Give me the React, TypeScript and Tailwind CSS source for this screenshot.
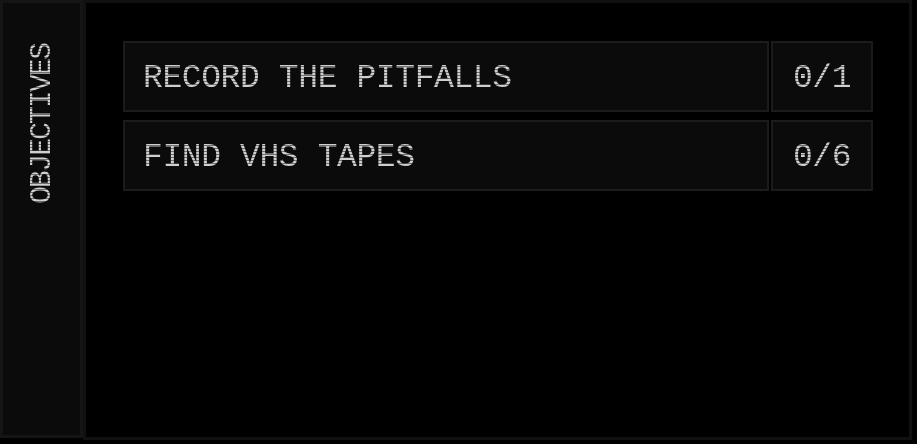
import React from 'react';

const objectives = [
  { label: 'RECORD THE PITFALLS', done: 0, total: 1 },
  { label: 'FIND VHS TAPES', done: 0, total: 6 },
];

const scan =
  'bg-[repeating-linear-gradient(to_bottom,#cfcfcf_0px,#cfcfcf_2px,#6f6f6f_2px,#6f6f6f_3px)] bg-clip-text text-transparent';

export default function App() {
  return (
    <div
      className="w-[917px] h-[444px] bg-black flex overflow-hidden"
      style={{ fontFamily: '"Liberation Mono", "DejaVu Sans Mono", monospace' }}
    >
      {/* side tab */}
      <div className="w-[83px] h-[438px] shrink-0 bg-[#0b0b0b] border-[3px] border-[#151515] flex justify-center pt-[39px]">
        <span
          className={`[writing-mode:vertical-rl] rotate-180 text-[30px] leading-[30px] tracking-[-2px] h-[162px] ${scan}`}
        >
          OBJECTIVES
        </span>
      </div>

      {/* list */}
      <div className="w-[829px] h-[440px] shrink-0 bg-black border-[3px] border-[#111111] pl-[37px] pr-[36px] pt-[38px] flex flex-col gap-[8px]">
        {objectives.map((o) => (
          <div key={o.label} className="flex gap-[2px] h-[71px]">
            <div className="flex-1 bg-[#0b0b0b] border-[2px] border-[#1b1b1b] flex items-center pl-[18px] pt-[4px]">
              <span className={`text-[33px] leading-[36px] tracking-[-0.4px] ${scan}`}>{o.label}</span>
            </div>
            <div className="w-[102px] bg-[#0b0b0b] border-[2px] border-[#1b1b1b] flex items-center justify-center pt-[4px]">
              <span className={`text-[33px] leading-[36px] tracking-[-0.4px] ${scan}`}>
                {o.done}/{o.total}
              </span>
            </div>
          </div>
        ))}
      </div>
    </div>
  );
}
